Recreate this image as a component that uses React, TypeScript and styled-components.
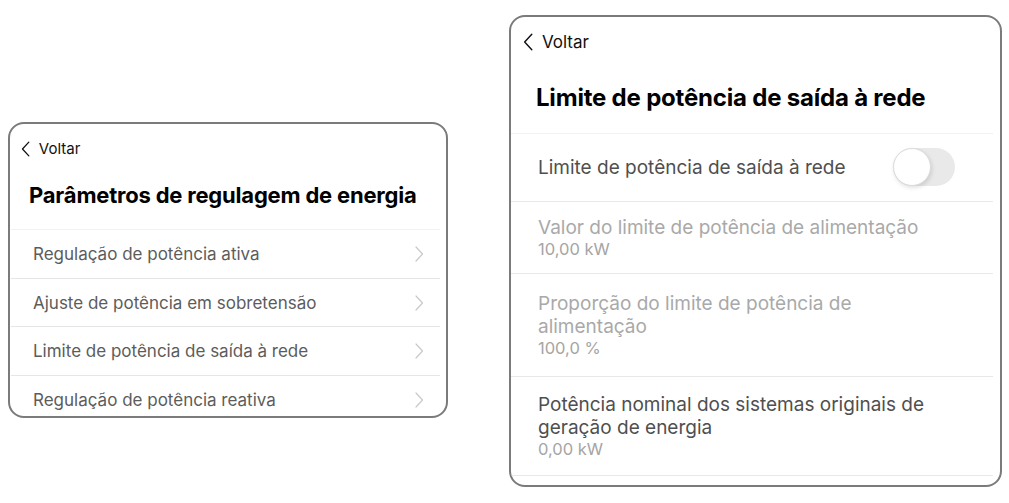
import React from "react";
import styled, { createGlobalStyle } from "styled-components";

const GlobalStyle = createGlobalStyle`
  html, body {
    margin: 0;
    padding: 0;
    background: #ffffff;
  }
  body {
    font-family: Inter, "Liberation Sans", Arial, sans-serif;
    -webkit-font-smoothing: antialiased;
  }
`;

const Page = styled.div`
  display: flex;
  align-items: flex-start;
  gap: 61px;
  padding-left: 8px;
  width: 1009px;
  height: 503px;
  box-sizing: border-box;
  overflow: hidden;
`;

const Card = styled.div<{ $top: number; $width: number; $height: number }>`
  margin-top: ${(p) => p.$top}px;
  width: ${(p) => p.$width}px;
  height: ${(p) => p.$height}px;
  box-sizing: border-box;
  border: 2px solid #7b7b7b;
  border-radius: 16px;
  background: #fff;
  overflow: hidden;
  display: flex;
  flex-direction: column;
`;

const BackBar = styled.div<{ $pad: string; $size: number }>`
  display: flex;
  align-items: center;
  gap: 9px;
  padding: ${(p) => p.$pad};
  font-size: ${(p) => p.$size}px;
  color: #111;
  height: 20px;
`;

const Title = styled.h1<{ $size: number; $pad: string }>`
  margin: 0;
  padding: ${(p) => p.$pad};
  font-size: ${(p) => p.$size}px;
  line-height: 1.2;
  font-weight: 700;
  color: #000;
  letter-spacing: -0.2px;
  white-space: nowrap;
`;

const List = styled.div<{ $margin: string }>`
  margin: ${(p) => p.$margin};
  border-top: 1px solid #f2f2f2;
`;

const MenuRow = styled.div`
  display: flex;
  align-items: center;
  justify-content: space-between;
  height: 48.5px;
  box-sizing: border-box;
  padding: 0 16px 0 22px;
  border-bottom: 1px solid #e6e6e6;
  font-size: 17px;
  color: #5c5c5c;
`;

const SettingRow = styled.div<{ $height: number }>`
  display: flex;
  align-items: center;
  justify-content: space-between;
  height: ${(p) => p.$height}px;
  padding: 0 38px 0 27px;
  border-bottom: 1px solid #e8e8e8;
  box-sizing: border-box;
`;

const SettingText = styled.div`
  display: flex;
  flex-direction: column;
`;

const SettingLabel = styled.div<{ $disabled?: boolean }>`
  font-size: 19px;
  line-height: 23px;
  color: ${(p) => (p.$disabled ? "#a9a9a9" : "#4f4f4f")};
  max-width: 400px;
`;

const SettingValue = styled.div`
  font-size: 16.5px;
  line-height: 20px;
  color: #a5a5a5;
`;

const Toggle = styled.div`
  position: relative;
  width: 62px;
  height: 38px;
  border-radius: 19px;
  background: #e9e9e9;
  box-sizing: border-box;
  flex-shrink: 0;
`;

const Knob = styled.div`
  position: absolute;
  left: 0;
  top: 0;
  width: 38px;
  height: 38px;
  border-radius: 50%;
  background: #fff;
  border: 1px solid #dcdcdc;
  box-sizing: border-box;
  box-shadow: 1px 2px 4px rgba(0, 0, 0, 0.12);
`;

function BackChevron({ size }: { size: number }) {
  return (
    <svg width={size * 0.55} height={size} viewBox="0 0 9 16" fill="none">
      <path d="M8 1L1.5 8L8 15" stroke="#111" strokeWidth="1.3" strokeLinecap="round" strokeLinejoin="round" />
    </svg>
  );
}

function RowChevron() {
  return (
    <svg width="9" height="16" viewBox="0 0 9 16" fill="none">
      <path d="M1 1L7.5 8L1 15" stroke="#c9c9c9" strokeWidth="1.2" strokeLinecap="round" strokeLinejoin="round" />
    </svg>
  );
}

const menuItems = [
  "Regulação de potência ativa",
  "Ajuste de potência em sobretensão",
  "Limite de potência de saída à rede",
  "Regulação de potência reativa",
];

type Setting = {
  label: string;
  value?: string;
  disabled?: boolean;
  toggle?: boolean;
  height: number;
};

const settings: Setting[] = [
  { label: "Limite de potência de saída à rede", toggle: true, height: 68 },
  { label: "Valor do limite de potência de alimentação", value: "10,00 kW", disabled: true, height: 72 },
  { label: "Proporção do limite de potência de alimentação", value: "100,0 %", disabled: true, height: 103 },
  { label: "Potência nominal dos sistemas originais de geração de energia", value: "0,00 kW", height: 99 },
];

export default function App() {
  return (
    <>
      <GlobalStyle />
      <Page>
        <Card $top={122} $width={440} $height={296}>
          <BackBar $pad="15px 0 0 11px" $size={15}>
            <BackChevron size={16} />
            <span>Voltar</span>
          </BackBar>
          <Title $size={22} $pad="24px 0 0 19px">Parâmetros de regulagem de energia</Title>
          <List $margin="21px 6px 0 1px">
            {menuItems.map((m) => (
              <MenuRow key={m}>
                <span>{m}</span>
                <RowChevron />
              </MenuRow>
            ))}
          </List>
        </Card>
        <Card $top={15} $width={493} $height={472}>
          <BackBar $pad="15px 0 0 12px" $size={17}>
            <BackChevron size={18} />
            <span>Voltar</span>
          </BackBar>
          <Title $size={24} $pad="32px 0 0 25px">Limite de potência de saída à rede</Title>
          <List $margin="20px 7px 0 0">
            {settings.map((s) => (
              <SettingRow key={s.label} $height={s.height}>
                <SettingText>
                  <SettingLabel $disabled={s.disabled}>{s.label}</SettingLabel>
                  {s.value && <SettingValue>{s.value}</SettingValue>}
                </SettingText>
                {s.toggle && (
                  <Toggle>
                    <Knob />
                  </Toggle>
                )}
              </SettingRow>
            ))}
          </List>
        </Card>
      </Page>
    </>
  );
}
